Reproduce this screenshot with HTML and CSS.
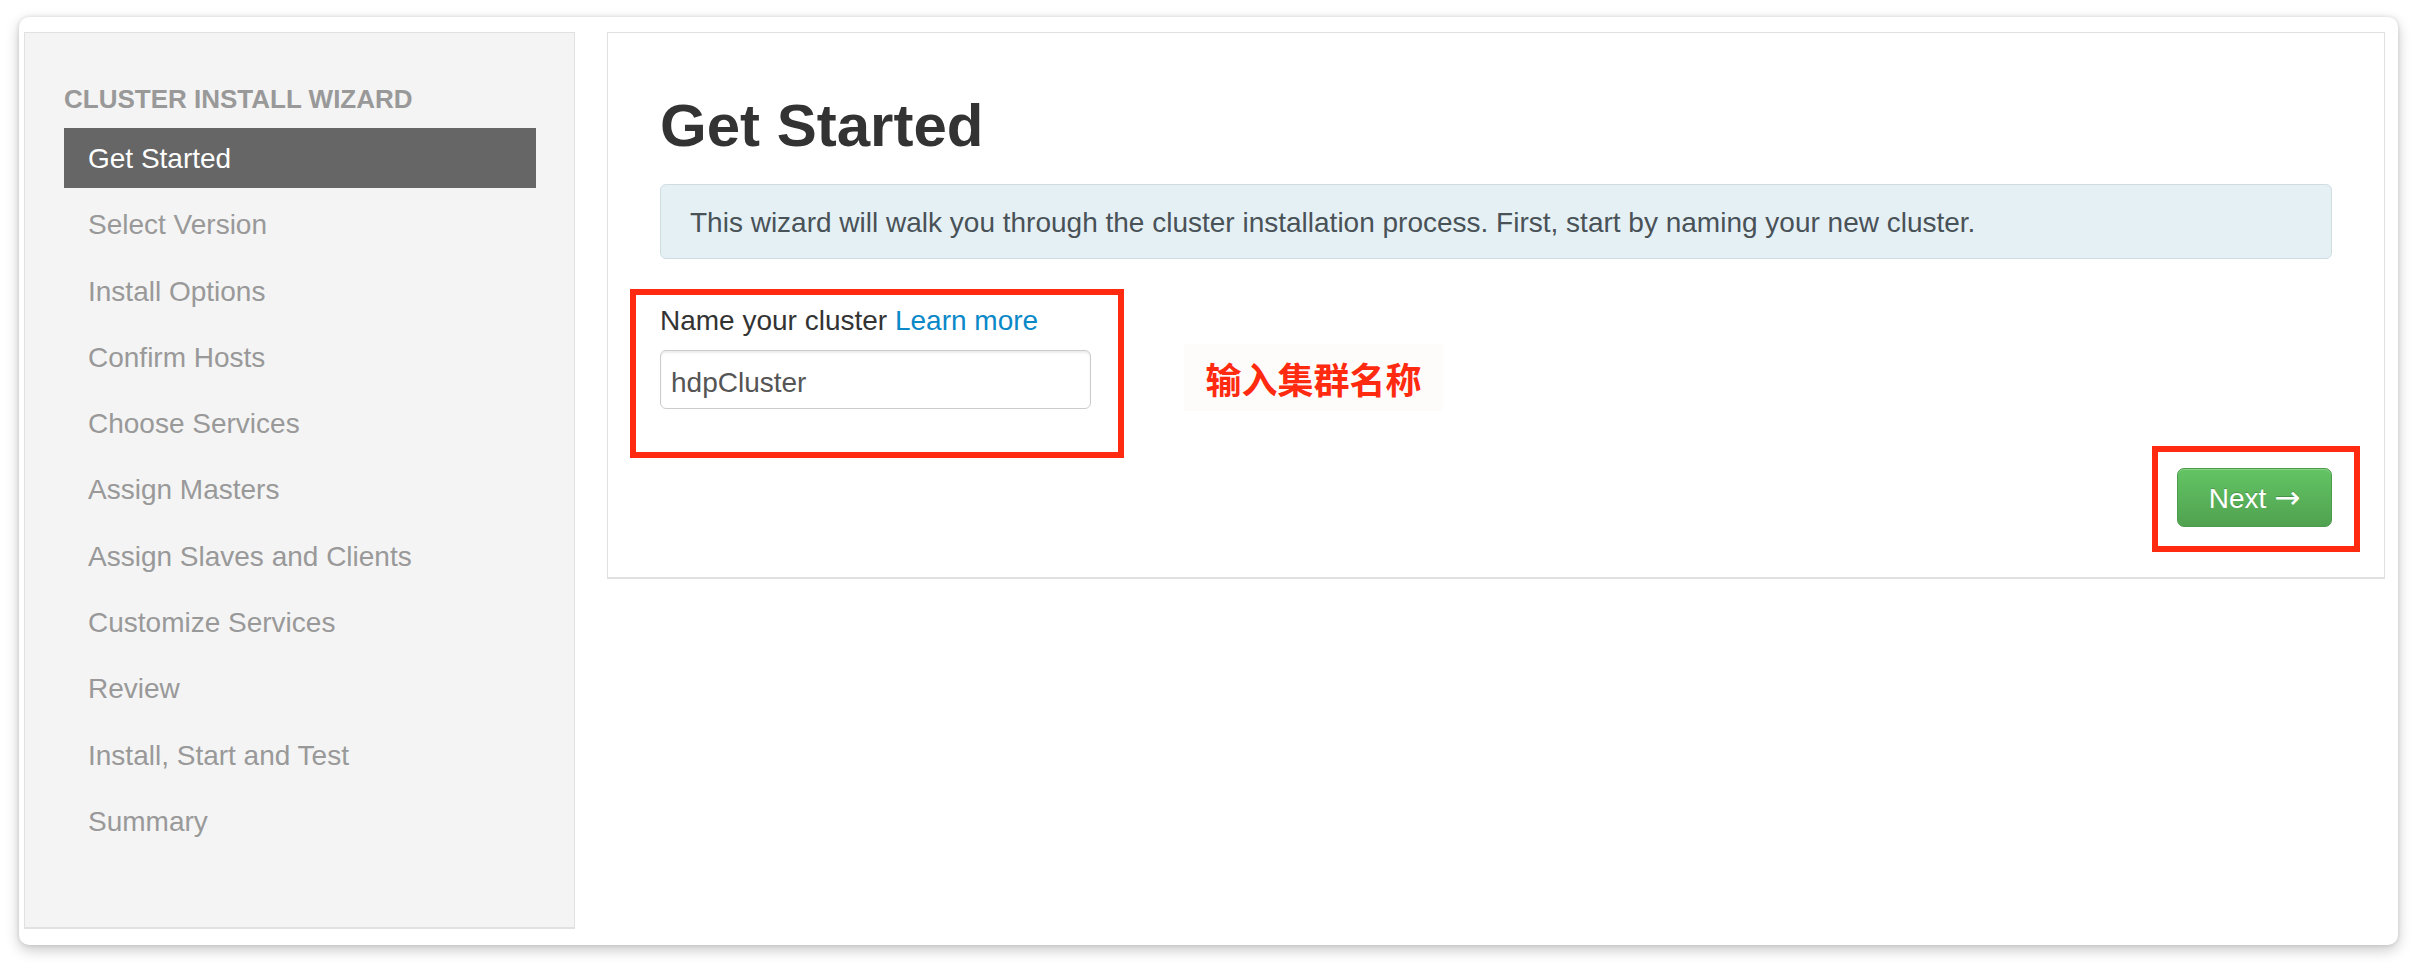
FILE: index.html
```html
<!DOCTYPE html>
<html>
<head>
<meta charset="utf-8">
<link rel="stylesheet" href="styles.css">
</head>
<body>
<div class="page">
  <div class="card">
    <aside class="sidebar">
      <div class="side-title">CLUSTER INSTALL WIZARD</div>
      <ul class="steps">
        <li class="step active">Get Started</li>
        <li class="step">Select Version</li>
        <li class="step">Install Options</li>
        <li class="step">Confirm Hosts</li>
        <li class="step">Choose Services</li>
        <li class="step">Assign Masters</li>
        <li class="step">Assign Slaves and Clients</li>
        <li class="step">Customize Services</li>
        <li class="step">Review</li>
        <li class="step">Install, Start and Test</li>
        <li class="step">Summary</li>
      </ul>
    </aside>
    <main class="panel">
      <h1 class="title">Get Started</h1>
      <div class="alert">This wizard will walk you through the cluster installation process. First, start by naming your new cluster.</div>
      <div class="form">
        <label class="label">Name your cluster <a class="link">Learn more</a></label>
        <input class="input" type="text" value="hdpCluster">
      </div>
      <div class="actions">
        <button class="btn-next">Next <span class="arrow">→</span></button>
      </div>
      <div class="mark mark-form"></div>
      <div class="mark mark-next"></div>
      <div class="note">输入集群名称</div>
    </main>
  </div>
</div>
</body>
</html>
```
FILE: styles.css
```css
* { box-sizing: border-box; }
html, body { margin: 0; padding: 0; background: #ffffff; }
body { font-family: "Liberation Sans", Arial, Helvetica, sans-serif; }

.page {
  padding: 17px 18px 19px 19px;
}

.card {
  display: flex;
  align-items: flex-start;
  gap: 32px;
  background: #ffffff;
  border-radius: 10px;
  padding: 15px 13px 16px 5px;
  height: 928px;
  box-shadow: 0 5px 14px rgba(0, 0, 0, 0.22), 0 0 4px rgba(0, 0, 0, 0.12);
}

.sidebar {
  width: 551px;
  flex: 0 0 551px;
  height: 897px;
  background: #f4f4f4;
  border: 1px solid #e1e1e1;
  border-bottom-width: 2px;
  padding: 51px 38px 0 39px;
}

.side-title {
  font-size: 26px;
  font-weight: bold;
  line-height: 30px;
  color: #999999;
}

.steps {
  list-style: none;
  margin: 14px 0 0 0;
  padding: 0;
}

.step {
  height: 60px;
  line-height: 61px;
  margin-bottom: 6.3px;
  padding-left: 24px;
  font-size: 28px;
  color: #999999;
  white-space: nowrap;
}

.step.active {
  background: #666666;
  color: #ffffff;
}

.panel {
  position: relative;
  flex: 1;
  border: 1px solid #e0e0e0;
  border-bottom-width: 2px;
  padding: 56px 52px 50px 52px;
}

.title {
  margin: 0;
  font-size: 60px;
  line-height: 73px;
  font-weight: bold;
  color: #333333;
}

.alert {
  margin-top: 22px;
  height: 75px;
  background: #e5f0f5;
  border: 1px solid #cfdde3;
  border-radius: 6px;
  padding: 19px 29px 17px 29px;
  font-size: 28px;
  line-height: 37px;
  color: #495257;
}

.form {
  display: flex;
  flex-direction: column;
  align-items: flex-start;
  margin-top: 43px;
}

.label {
  font-size: 28px;
  line-height: 38px;
  color: #333333;
}

.link {
  color: #0a88c8;
  text-decoration: none;
}

.input {
  margin-top: 10px;
  width: 431px;
  height: 59px;
  border: 1px solid #cccccc;
  border-radius: 6px;
  padding: 13px 10px 7px 10px;
  font-family: "Liberation Sans", Arial, sans-serif;
  font-size: 28px;
  line-height: 37px;
  color: #555555;
  box-shadow: inset 0 2px 2px rgba(0, 0, 0, 0.08);
  background: #ffffff;
  outline: none;
}

.actions {
  display: flex;
  justify-content: flex-end;
  margin-top: 59px;
}

.btn-next {
  width: 155px;
  height: 59px;
  border: 1px solid #4c9a4c;
  border-radius: 7px;
  background: linear-gradient(to bottom, #63c463, #50a250);
  box-shadow: inset 0 1px 0 rgba(255, 255, 255, 0.25);
  color: #ffffff;
  font-family: "Liberation Sans", Arial, sans-serif;
  font-size: 28px;
  text-shadow: 0 -1px 0 rgba(0, 0, 0, 0.2);
  padding: 2px 0 0 0;
  white-space: nowrap;
}

.arrow {
  font-family: "DejaVu Sans", sans-serif;
  font-size: 31px;
  line-height: 1;
}

.mark {
  position: absolute;
  border: 6px solid #ff2a10;
}

.mark-form {
  left: 22px;
  top: 256px;
  width: 494px;
  height: 169px;
}

.mark-next {
  left: 1544px;
  top: 413px;
  width: 208px;
  height: 106px;
}

.note {
  position: absolute;
  left: 576px;
  top: 311px;
  width: 259px;
  height: 67px;
  background: #fdfcfb;
  color: #ff2a10;
  font-family: "Noto Sans CJK SC", sans-serif;
  font-weight: bold;
  font-size: 36px;
  line-height: 68px;
  text-align: center;
}
```
